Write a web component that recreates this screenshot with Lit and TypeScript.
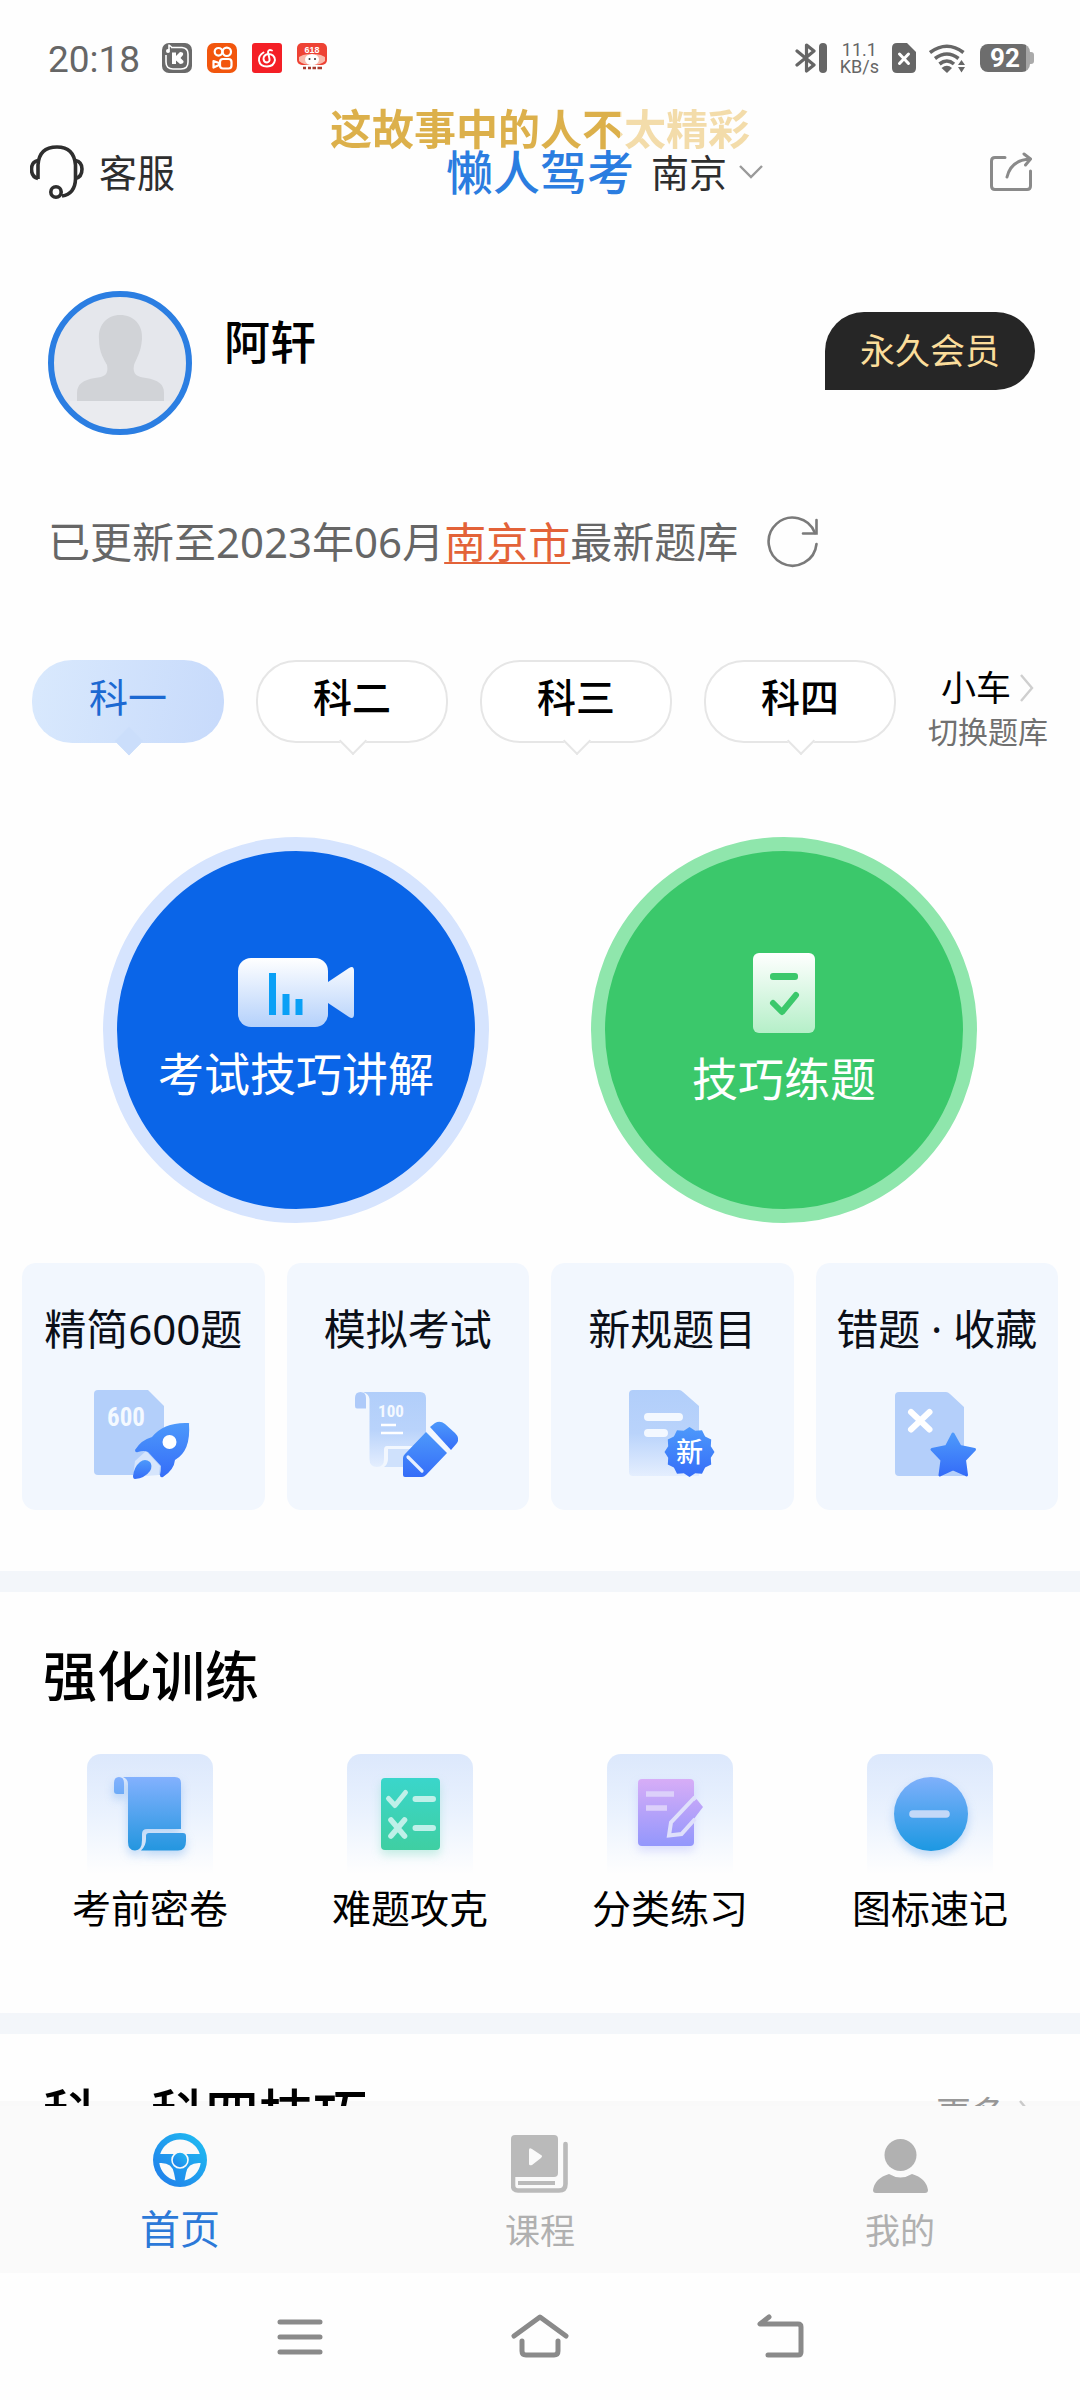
import { LitElement, html, svg, css, type TemplateResult } from "lit";
import { customElement, state } from "lit/decorators.js";
import { classMap } from "lit/directives/class-map.js";

interface Entry {
  label: string;
  icon: TemplateResult;
}

/* ---------- status bar glyphs ---------- */

const recorderIcon = html`<svg class="app-icon" viewBox="0 0 30 30" aria-hidden="true">
  <rect width="30" height="30" rx="7" fill="#6a6a6a" />
  <path d="M9 4.500H20Q26 5 26 11V19Q26 26 19 26H11Q4 26 4 19V12" fill="none" stroke="#fff" stroke-width="1.600" />
  <path d="M7 1.500V7M7 2L9.500 4" fill="none" stroke="#fff" stroke-width="1.600" />
  <circle cx="6" cy="8" r="2" fill="#fff" />
  <path d="M10 9.500H14V13L18 9Q22 9 21 12L18.500 15L21.500 18Q22 21 18 21L14 17.500V21H10Z" fill="#fff" />
</svg>`;

const cameraIcon = html`<svg class="app-icon" viewBox="0 0 30 30" aria-hidden="true">
  <rect width="30" height="30" rx="7" fill="#f2560d" />
  <g fill="none" stroke="#fff" stroke-width="2.200" stroke-linejoin="round">
    <circle cx="11.500" cy="8.800" r="3.800" />
    <circle cx="19.800" cy="8.800" r="4.200" />
    <rect x="13" y="16" width="11.500" height="9.500" rx="3" />
    <path d="M6.500 18L12 20V22L6.500 24.500Z" />
  </g>
</svg>`;

const musicIcon = html`<svg class="app-icon" viewBox="0 0 30 30" aria-hidden="true">
  <rect width="30" height="30" rx="3" fill="#f41f26" />
  <g fill="none" stroke="#fff" stroke-width="1.900" stroke-linecap="round">
    <path d="M11.500 9.500Q6.500 12.500 7 17.500Q8 23.500 15 23.500Q22 23.500 23 17Q22.500 11 16 11Q11.500 12 11.500 16Q12 19.500 15 19.500Q18 19 17.500 16L16 9Q16.500 6 20 7.500" />
  </g>
</svg>`;

const shopIcon = html`<svg class="app-icon" viewBox="0 0 30 30" aria-hidden="true">
  <rect y="0" width="30" height="22" rx="5" fill="#ee4234" />
  <path d="M2 14Q8 10 15 12Q22 10 28 14V18Q24 22 15 22Q6 22 2 18Z" fill="#f9b9ab" />
  <ellipse cx="15" cy="16.500" rx="7" ry="5.500" fill="#fff" />
  <circle cx="12.500" cy="16" r="1" fill="#333" /><circle cx="18" cy="16" r="1" fill="#333" />
  <text x="15" y="10" text-anchor="middle" class="promo">618</text>
  <path d="M6 25H9M11 25H14M15.500 25H19M20.500 25H25" stroke="#a83a2e" stroke-width="2.400" />
</svg>`;

const bluetoothIcon = html`<svg width="32" height="30" viewBox="0 0 32 30" aria-hidden="true">
  <path d="M2 8L19 22L11.500 28V2L19 8L2 22" fill="none" stroke="#666" stroke-width="3.200" stroke-linejoin="round" stroke-linecap="round" />
  <rect x="24" width="8" height="30" rx="4" fill="#666" />
</svg>`;

const simIcon = html`<svg width="24" height="30" viewBox="0 0 24 30" aria-hidden="true">
  <path d="M5 0H15L24 9V25Q24 30 19 30H5Q0 30 0 25V5Q0 0 5 0Z" fill="#666" />
  <path d="M7.500 11L16.500 20.500M16.500 11L7.500 20.500" stroke="#fff" stroke-width="3" stroke-linecap="round" />
</svg>`;

const wifiIcon = html`<svg width="36" height="30" viewBox="0 0 36 30" aria-hidden="true">
  <g fill="none" stroke="#666" stroke-width="3.600">
    <path d="M1 9.500Q18 -3 34.500 9.500" />
    <path d="M6 15.500Q18 6.500 29.500 15.500" />
    <path d="M10.500 21Q18 15 25 21" />
  </g>
  <path d="M12.500 25Q18 20.500 23 25L18 30Z" fill="#666" />
  <path d="M29 22L32.500 17L36 22ZM29 24L32.500 29.500L36 24Z" fill="#666" />
</svg>`;

/* ---------- header and profile ---------- */

const headsetIcon = html`<svg width="54" height="54" viewBox="0 0 54 54" fill="none" stroke="#2e2e2e" stroke-width="3.600" aria-hidden="true">
  <path d="M8 34V20Q9 2 27 2Q44 2 45.500 20V34Q45 49 32 51" />
  <path d="M8 15.500Q1.500 17 1.500 24Q1.500 32 8 33.500" />
  <path d="M45.500 15.500Q52 17 52 24Q52 32 45.500 33.500" />
  <circle cx="26" cy="47" r="5.200" />
</svg>`;

const shareIcon = html`<svg width="42" height="40" viewBox="0 0 42 40" fill="none" stroke="#8a8a8a" stroke-width="3" stroke-linecap="round" stroke-linejoin="round" aria-hidden="true">
  <path d="M15 5.500H5Q1.500 5.500 1.500 9V34Q1.500 37.500 5 37.500H37Q40.500 37.500 40.500 34V19" />
  <path d="M17 25Q21 8 40 7M34 2L40.500 7L35.500 13" />
</svg>`;

const refreshIcon = html`<svg width="52" height="52" viewBox="0 0 52 52" fill="none" stroke="#7a7a7a" stroke-width="2.600" stroke-linecap="round" aria-hidden="true">
  <path d="M49.500 28A24 24 0 1 1 48 17" />
  <path d="M49.500 4V17.500H36" />
</svg>`;

const avatarIcon = html`<svg class="avatar" viewBox="0 0 144 144" role="img" aria-label="头像">
  <circle cx="72" cy="72" r="69" fill="#e5e7ec" />
  <path d="M22 110H122V122Q100 141 72 141Q44 141 22 122Z" fill="#eaebef" />
  <path d="M72 24C86 24 95 34 94 48C93 62 88 68 86 74C84 84 90 86 98 87C110 89 116 93 116 102V110H29V102C29 93 35 89 47 87C56 86 61 84 59 74C56 68 51 62 51 48C50 34 59 24 72 24Z" fill="#d1d3d7" />
  <circle cx="72" cy="72" r="69" fill="none" stroke="#2b7ee2" stroke-width="6" />
</svg>`;

const chevronDown = html`<svg width="24" height="14" viewBox="0 0 24 14" fill="none" stroke="#9a9a9a" stroke-width="2.400" aria-hidden="true">
  <path d="M1 1L12 12L23 1" />
</svg>`;

const chevronRight = html`<svg width="16" height="28" viewBox="0 0 16 28" fill="none" stroke="#cfcfcf" stroke-width="2.400" aria-hidden="true">
  <path d="M2 1L13 14L2 27" />
</svg>`;

/* ---------- large round actions ---------- */

const videoIcon = html`<svg width="116" height="70" viewBox="0 0 116 70" aria-hidden="true">
  <defs>
    <linearGradient id="video" gradientUnits="userSpaceOnUse" x1="0" y1="0" x2="0" y2="70">
      <stop offset="0" stop-color="#fff" /><stop offset="1" stop-color="#b3d0fb" />
    </linearGradient>
  </defs>
  <rect width="90" height="69" rx="13" fill="url(#video)" />
  <path d="M90 24L111 10Q116 7 116 13V56Q116 62 111 59L90 45Z" fill="url(#video)" />
  <path d="M34.500 15V57M48 36V57M61 41V57" stroke="#0aa0f6" stroke-width="7" />
</svg>`;

const checklistIcon = html`<svg width="62" height="80" viewBox="0 0 62 80" aria-hidden="true">
  <defs>
    <linearGradient id="sheet" x1="0" y1="0" x2="0" y2="1">
      <stop offset="0" stop-color="#fff" /><stop offset="1" stop-color="#b5efc8" />
    </linearGradient>
  </defs>
  <rect width="62" height="80" rx="6" fill="url(#sheet)" />
  <rect x="17" y="20" width="28" height="7" rx="3" fill="#3bc86b" />
  <path d="M20 50L29 59L43 42" fill="none" stroke="#3bc86b" stroke-width="6" stroke-linecap="round" stroke-linejoin="round" />
</svg>`;

/* ---------- card icons (110 x 90) ---------- */

const blueDefs = svg`<defs>
  <linearGradient id="deep" x1="0" y1="0" x2="0" y2="1">
    <stop offset="0" stop-color="#4d99fb" /><stop offset="1" stop-color="#356df8" />
  </linearGradient>
  <linearGradient id="pale" x1="0" y1="0" x2="0" y2="1">
    <stop offset="0" stop-color="#b1cefa" /><stop offset=".5" stop-color="#b9d3fb" /><stop offset="1" stop-color="#e4eefe" />
  </linearGradient>
</defs>`;

const rocketCard = html`<svg class="card-icon" viewBox="0 0 110 90" aria-hidden="true">
  ${blueDefs}
  <path d="M10 1H60L76 17V86H10Q6 86 6 82V5Q6 1 10 1Z" fill="#b3cffa" />
  <text x="38" y="37" text-anchor="middle" class="digits-large">600</text>
  <path d="M58 62L72 77L71 86L45 88L47 72Z" fill="#d6e5fc" />
  <path d="M101 35Q102 34 100 34Q76 33 64 48Q53 51 47 61Q47 64 50 63Q56 61 60 63L73 77Q73 82 72 86Q72 89 75 88Q86 81 87 71Q103 62 101 35Z" fill="url(#deep)" />
  <circle cx="81.500" cy="53" r="7" fill="#fff" />
  <path d="M52 73Q57 69 62 73Q65 77 62 82Q57 89 47 90Q45 90 45 87Q46 78 52 73Z" fill="url(#deep)" />
</svg>`;

const examCard = html`<svg class="card-icon" viewBox="0 0 110 90" aria-hidden="true">
  ${blueDefs}
  <path d="M2 9Q2 3 7.500 3Q13 3 13 9V19.500H4Q2 19.500 2 17Z" fill="#aecaf9" />
  <path d="M10 3H67Q73 3 73 9V57H34Q31 57 31 61V70Q31 78 24 78Q16.500 78 16.500 70V10Q16 5 10 3Z" fill="url(#pale)" />
  <path d="M35 60H70V78H31Q35 75 35 70Z" fill="#cfe1fc" />
  <text x="38" y="28" text-anchor="middle" class="digits-small">100</text>
  <path d="M28 36H43M28 44H50" stroke="#fff" stroke-width="2.600" />
  <path d="M77 38L82 34Q87 31 92 35L102 44Q107 49 104 54L98 61Z" fill="url(#deep)" />
  <path d="M73 43L94 64L73 86Q71 88 69 88H52Q50 88 50 86V69Q50 67 52 65Z" fill="url(#deep)" />
  <path d="M55 68L69 82" stroke="#e6efff" stroke-width="3.200" stroke-linecap="round" />
</svg>`;

const sealPoints = Array.from({ length: 24 }, (_, i) => {
  const r = i % 2 ? 22 : 25;
  const a = (i * Math.PI) / 12;
  return `${(72.5 + r * Math.sin(a)).toFixed(1)},${(63 - r * Math.cos(a)).toFixed(1)}`;
}).join(" ");

const newRulesCard = html`<svg class="card-icon" viewBox="0 0 110 90" aria-hidden="true">
  ${blueDefs}
  <path d="M16 1H62Q64 1 66 3L82 17V87H16Q12 87 12 83V5Q12 1 16 1Z" fill="url(#pale)" />
  <path d="M31 28H62M31 44H47" stroke="#f3f8ff" stroke-width="8" stroke-linecap="round" />
  <polygon points=${sealPoints} fill="url(#deep)" />
  <text x="72.500" y="73" text-anchor="middle" class="seal">新</text>
</svg>`;

const starCard = html`<svg class="card-icon" viewBox="0 0 110 90" aria-hidden="true">
  ${blueDefs}
  <path d="M17 3H64Q66 3 68 5L82 18V87H17Q13 87 13 83V7Q13 3 17 3Z" fill="#b4cffa" />
  <path d="M29 23L47.500 40.500M47.500 23L29 40.500" stroke="#fff" stroke-width="6" stroke-linecap="round" />
  <path d="M71 45L78 57.500L92.500 60.500L82.500 71L84.500 86L71 80L58 86L60 71L50 60.500L64.500 57.500Z" fill="url(#deep)" stroke="url(#deep)" stroke-width="3" stroke-linejoin="round" />
</svg>`;

/* ---------- training tiles (126 x 120) ---------- */

const scrollTile = html`<svg class="tile" viewBox="0 0 126 120" aria-hidden="true">
  <defs>
    <linearGradient id="scroll" gradientUnits="userSpaceOnUse" x1="0" y1="23" x2="0" y2="97">
      <stop offset="0" stop-color="#83b1fe" /><stop offset="1" stop-color="#2396df" />
    </linearGradient>
  </defs>
  <g class="soft-blue" fill="url(#scroll)">
    <path d="M27 29Q27 23 32 23Q37 23 37 29V40H30Q27 40 27 37Z" />
    <path d="M36 23H88Q94 23 94 29V75H60Q55 75 55 80V86Q55 96.500 48 96.500Q41 96.500 41 88V30Q41 25 36 23Z" />
    <path d="M59 82Q59 79 62 79H96Q99 79 99 82V87Q99 96.500 91 96.500H54Q59 92 59 85Z" />
  </g>
</svg>`;

const hardTile = html`<svg class="tile" viewBox="0 0 126 120" aria-hidden="true">
  <defs>
    <linearGradient id="teal" x1="0" y1="0" x2="0" y2="1">
      <stop offset="0" stop-color="#3ad6cb" /><stop offset="1" stop-color="#3fcfa2" />
    </linearGradient>
  </defs>
  <rect class="soft-teal" x="34" y="24" width="59" height="72" rx="4" fill="url(#teal)" />
  <g fill="none" stroke="#bff0e9" stroke-linecap="round" stroke-linejoin="round">
    <path d="M41.500 44.500L48 51.500L58.500 38.500" stroke-width="5" />
    <path d="M44 66L57.500 82M57.500 66L44 82" stroke-width="5.600" />
    <path d="M68.500 45H86M68.500 74H86" stroke-width="6" />
  </g>
</svg>`;

const categoryTile = html`<svg class="tile" viewBox="0 0 126 120" aria-hidden="true">
  <defs>
    <linearGradient id="violet" gradientUnits="userSpaceOnUse" x1="0" y1="25" x2="0" y2="92">
      <stop offset="0" stop-color="#d7adf7" /><stop offset="1" stop-color="#9397fc" />
    </linearGradient>
  </defs>
  <rect class="soft-violet" x="31" y="25" width="56" height="67" rx="4" fill="url(#violet)" />
  <path d="M39 40H67M39 54H60" stroke="#dcd0fa" stroke-width="5.600" />
  <path d="M89.500 45L96 53L75 80.500L61.500 82L64 68Z" fill="url(#violet)" />
  <path d="M88 43L64 68.500L62 81.500L74.500 80L88 65" fill="none" stroke="#dfe0fb" stroke-width="4" />
</svg>`;

const signTile = html`<svg class="tile" viewBox="0 0 126 120" aria-hidden="true">
  <defs>
    <linearGradient id="sign" x1="0" y1="0" x2="0" y2="1">
      <stop offset="0" stop-color="#7fb0fb" /><stop offset="1" stop-color="#1c98e2" />
    </linearGradient>
  </defs>
  <circle class="soft-blue" cx="64" cy="60" r="37" fill="url(#sign)" />
  <path d="M46 60H79" stroke="#c3d8f8" stroke-width="7.600" stroke-linecap="round" />
</svg>`;

/* ---------- bottom tabs ---------- */

const wheelIcon = html`<svg width="54" height="60" viewBox="0 0 54 60" aria-hidden="true">
  <defs>
    <linearGradient id="wheel" x1="0" y1="1" x2="1" y2="0">
      <stop offset="0" stop-color="#2179ea" /><stop offset="1" stop-color="#1fc0f2" />
    </linearGradient>
  </defs>
  <circle cx="27" cy="27" r="27" fill="url(#wheel)" />
  <g fill="#fafafa">
    <path d="M7.200 21A20.800 20.800 0 0 1 46.800 21Z" />
    <path d="M6.300 30Q19 29 21 40L22.500 47.400A21 21 0 0 1 6.300 30Z" />
    <path d="M47.700 30Q35 29 33 40L31.500 47.400A21 21 0 0 0 47.700 30Z" />
  </g>
  <circle cx="27" cy="27" r="8" fill="url(#wheel)" stroke="#fafafa" stroke-width="1.600" />
</svg>`;

const courseIcon = html`<svg width="58" height="60" viewBox="0 0 58 60" aria-hidden="true">
  <rect y="2" width="47" height="42" rx="4" fill="#bababa" />
  <path d="M54.500 11V51Q54.500 57.500 48 57.500H7Q2 57.500 2 52V40" fill="none" stroke="#bababa" stroke-width="4.600" stroke-linecap="round" />
  <path d="M7 50H44" stroke="#bababa" stroke-width="4" />
  <path d="M18 17Q18 14 21 16L30 22Q32 23 30 25L21 32Q18 33 18 31Z" fill="#fafafa" />
</svg>`;

const personIcon = html`<svg width="55" height="60" viewBox="0 0 55 60" fill="#b1b1b1" aria-hidden="true">
  <circle cx="27.500" cy="22" r="16" />
  <path d="M16 41Q27.500 48 39 41Q53 45 55 57Q55 60 52 60H3Q0 60 0 57Q2 45 16 41Z" />
</svg>`;

@customElement("app-root")
export class AppRoot extends LitElement {
  @state() private subject = 0;

  private subjects = ["科一", "科二", "科三", "科四"];

  private cards: Entry[] = [
    { label: "精简600题", icon: rocketCard },
    { label: "模拟考试", icon: examCard },
    { label: "新规题目", icon: newRulesCard },
    { label: "错题 · 收藏", icon: starCard },
  ];

  private drills: Entry[] = [
    { label: "考前密卷", icon: scrollTile },
    { label: "难题攻克", icon: hardTile },
    { label: "分类练习", icon: categoryTile },
    { label: "图标速记", icon: signTile },
  ];

  private tabs: Entry[] = [
    { label: "首页", icon: wheelIcon },
    { label: "课程", icon: courseIcon },
    { label: "我的", icon: personIcon },
  ];

  static styles = css`
    :host {
      display: flex;
      flex-direction: column;
      height: 100vh;
      position: relative;
      overflow: hidden;
      background: #fefefe;
      color: #000;
      font-family: "Noto Sans", "Noto Sans CJK SC", sans-serif;
    }
    * { box-sizing: border-box; }
    svg { display: block; flex: none; }
    a { color: inherit; text-decoration: none; }
    button {
      margin: 0;
      padding: 0;
      border: 0;
      background: none;
      color: inherit;
      font: inherit;
    }
    h1, h2, p { margin: 0; font-weight: 500; }

    .status {
      flex: none;
      display: flex;
      align-items: center;
      justify-content: space-between;
      height: 116px;
      padding: 0 46px 0 48px;
      color: #666;
    }
    .status-group { display: flex; align-items: center; gap: 15px; }
    .clock {
      margin-right: 7px;
      font-family: Roboto, sans-serif;
      font-size: 37px;
      line-height: 40px;
      padding-top: 4px;
    }
    .app-icon { width: 30px; height: 30px; }
    .promo { font: 700 9px "Liberation Sans", sans-serif; fill: #fff; }
    .status-right { gap: 13px; }
    .speed {
      font-family: Roboto, sans-serif;
      font-size: 18px;
      line-height: 17px;
      text-align: center;
    }
    .battery { display: flex; align-items: center; margin-left: 2px; }
    .battery-body {
      width: 50px;
      height: 28px;
      border-radius: 8px;
      background: linear-gradient(90deg, #6d6d6d 92%, #a5a5a5 92%);
      color: #fff;
      font: 700 26px/28px Roboto, sans-serif;
      text-align: center;
    }
    .battery-tip { width: 4px; height: 12px; border-radius: 0 3px 3px 0; background: #aaa; }

    .lyric {
      position: absolute;
      top: 101px;
      left: 0;
      right: 0;
      text-align: center;
      font-size: 42px;
      line-height: 56px;
      font-weight: 700;
      pointer-events: none;
    }
    .lyric span {
      color: transparent;
      background: linear-gradient(90deg, #dcb04b 69%, #f3dcaa 69%);
      background-clip: text;
      -webkit-background-clip: text;
    }

    header {
      flex: none;
      display: grid;
      grid-template-columns: 1fr auto 1fr;
      align-items: center;
      height: 112px;
      padding: 0 48px;
      font-size: 38px;
      line-height: 48px;
      color: #2e2e2e;
    }
    .service { display: flex; align-items: center; gap: 15px; justify-self: start; margin-left: -18px; }
    h1 { font-size: 47px; line-height: 56px; color: #2b7de0; }
    .header-end { display: flex; align-items: center; justify-content: space-between; padding-left: 17px; }
    .city { display: flex; align-items: center; gap: 12px; }

    main { flex: 1 1 0; min-height: 0; overflow: hidden; }

    .profile { display: flex; align-items: flex-start; padding: 63px 45px 0 48px; }
    .avatar { width: 144px; height: 144px; }
    .name { flex: 1; padding: 20px 0 0 32px; font-size: 46px; line-height: 60px; }
    .vip {
      margin-top: 21px;
      padding: 15px 35px;
      border-radius: 40px 40px 40px 0;
      background: #262626;
      color: #fbdd9b;
      font-size: 35px;
      line-height: 48px;
    }

    .update {
      display: flex;
      align-items: center;
      gap: 29px;
      padding: 79px 48px 0;
      font-size: 42px;
      line-height: 56px;
      color: #666;
    }
    .update a {
      color: #e36238;
      text-decoration: underline;
      text-decoration-thickness: 2px;
      text-underline-offset: 4px;
    }

    .subjects { display: flex; gap: 32px; padding: 90px 32px 0; }
    .subject {
      position: relative;
      flex: 1;
      height: 83px;
      margin-bottom: 13px;
      padding-bottom: 10px;
      border: 2px solid #e6e6e6;
      border-radius: 40px;
      background: #fff;
      font-size: 39px;
      line-height: 48px;
      font-weight: 500;
    }
    .subject::after {
      content: "";
      position: absolute;
      left: 50%;
      bottom: -10px;
      width: 18px;
      height: 18px;
      margin-left: -9px;
      border: solid #e6e6e6;
      border-width: 0 2px 2px 0;
      background: #fff;
      rotate: 45deg;
    }
    .subject.active {
      border-color: transparent;
      background: linear-gradient(100deg, #d9e9fd, #c7dafb) border-box;
      color: #1c69d2;
      font-weight: 400;
    }
    .subject.active::after { border-color: #cbdefb; background: #cbdefb; }
    .bank { display: flex; flex-direction: column; align-items: center; width: 120px; padding-top: 6px; }
    .bank-type { display: flex; align-items: center; gap: 8px; font-size: 35px; line-height: 44px; }
    .bank-hint { font-size: 30px; line-height: 44px; color: #707070; }

    .actions { display: flex; justify-content: space-between; padding: 81px 103px 0; }
    .action {
      display: flex;
      flex-direction: column;
      align-items: center;
      justify-content: center;
      gap: 16px;
      width: 386px;
      height: 386px;
      border: 14px solid #d6e4fe;
      border-radius: 50%;
      background: #0a65e8;
      color: #fff;
      font-size: 46px;
      line-height: 58px;
    }
    .action.green { border-color: #8fe6ac; background: #3bc86b; }

    .cards { display: grid; grid-template-columns: repeat(4, 1fr); gap: 22px; padding: 40px 22px 61px; }
    .card {
      display: flex;
      flex-direction: column;
      align-items: center;
      gap: 32px;
      padding: 38px 0 31px;
      border-radius: 14px;
      background: #f2f7fe;
      color: #0b0f18;
      font-size: 42px;
      line-height: 56px;
      white-space: nowrap;
    }
    .card-icon { width: 110px; height: 90px; }
    .digits-large { font: 700 25px "Roboto Condensed", Roboto, sans-serif; fill: #f4f9ff; }
    .digits-small { font: 700 17px "Roboto Condensed", Roboto, sans-serif; fill: #f4f9ff; }
    .seal { font: 500 27px "Noto Sans CJK SC", sans-serif; fill: #fff; }

    .block { border-top: 21px solid #f3f6fa; padding: 52px 20px 81px; }
    .block.next { padding: 48px 20px 0; }
    .block-head { display: flex; align-items: center; justify-content: space-between; padding: 0 26px 0 23px; }
    h2 { font-size: 54px; line-height: 64px; }
    .more { display: flex; align-items: center; gap: 12px; font-size: 35px; line-height: 48px; color: #999; }
    .drills { display: grid; grid-template-columns: repeat(4, 1fr); padding-top: 46px; }
    .drill { display: flex; flex-direction: column; align-items: center; gap: 10px; font-size: 39px; line-height: 48px; }
    .tile {
      width: 126px;
      height: 120px;
      border-radius: 14px 14px 0 0;
      background: linear-gradient(#dce8fc, #eaf2fe 50%, #fefefe);
    }
    .soft-blue { filter: drop-shadow(0 5px 5px #2b7ee244); }
    .soft-teal { filter: drop-shadow(0 5px 5px #3fcfa244); }
    .soft-violet { filter: drop-shadow(0 5px 5px #9397fc44); }

    .tabbar {
      position: relative;
      flex: none;
      display: grid;
      grid-template-columns: repeat(3, 1fr);
      padding: 27px 0 18px;
      background: #fafafa;
      box-shadow: 0 -5px 0 rgba(0, 0, 0, 0.02);
    }
    .tab {
      display: flex;
      flex-direction: column;
      align-items: center;
      gap: 14px;
      font-size: 35px;
      line-height: 48px;
      color: #b0b0b0;
    }
    .tab.active { gap: 12px; font-size: 40px; color: #2c79d8; }

    .system {
      flex: none;
      display: flex;
      justify-content: center;
      align-items: center;
      gap: 180px;
      height: 127px;
    }
    .system button { display: flex; justify-content: center; width: 60px; }
  `;

  render() {
    return html`
      <div class="status">
        <div class="status-group">
          <span class="clock">20:18</span>
          ${recorderIcon}${cameraIcon}${musicIcon}${shopIcon}
        </div>
        <div class="status-group status-right">
          ${bluetoothIcon}
          <div class="speed">11.1<br />KB/s</div>
          ${simIcon}${wifiIcon}
          <div class="battery">
            <div class="battery-body">92</div>
            <div class="battery-tip"></div>
          </div>
        </div>
      </div>

      <header>
        <button class="service">${headsetIcon}客服</button>
        <h1>懒人驾考</h1>
        <div class="header-end">
          <button class="city">南京${chevronDown}</button>
          <button aria-label="分享">${shareIcon}</button>
        </div>
      </header>

      <main>
        <section class="profile">
          ${avatarIcon}
          <p class="name">阿轩</p>
          <a class="vip" href="#vip">永久会员</a>
        </section>

        <div class="update">
          <span>已更新至2023年06月<a href="#city">南京市</a>最新题库</span>
          <button aria-label="刷新">${refreshIcon}</button>
        </div>

        <nav class="subjects">
          ${this.subjects.map(
            (name, i) => html`<button
              class=${classMap({ subject: true, active: i === this.subject })}
              @click=${() => (this.subject = i)}
            >${name}</button>`
          )}
          <button class="bank">
            <span class="bank-type">小车${chevronRight}</span>
            <span class="bank-hint">切换题库</span>
          </button>
        </nav>

        <div class="actions">
          <a class="action" href="#lessons">${videoIcon}<span>考试技巧讲解</span></a>
          <a class="action green" href="#practice">${checklistIcon}<span>技巧练题</span></a>
        </div>

        <div class="cards">
          ${this.cards.map((c) => html`<a class="card" href="#card"><span>${c.label}</span>${c.icon}</a>`)}
        </div>

        <section class="block">
          <div class="block-head"><h2>强化训练</h2></div>
          <div class="drills">
            ${this.drills.map((d) => html`<a class="drill" href="#drill">${d.icon}<span>${d.label}</span></a>`)}
          </div>
        </section>

        <section class="block next">
          <div class="block-head">
            <h2>科一科四技巧</h2>
            <a class="more" href="#more">更多${chevronRight}</a>
          </div>
        </section>
      </main>

      <nav class="tabbar">
        ${this.tabs.map(
          (t, i) => html`<a class=${classMap({ tab: true, active: i === 0 })} href="#tab">${t.icon}<span>${t.label}</span></a>`
        )}
      </nav>

      <div class="system">
        <button aria-label="菜单">
          <svg width="46" height="44" viewBox="0 0 46 44" stroke="#8a8a8a" stroke-width="5" stroke-linecap="round">
            <path d="M3 7H43M3 22H43M3 37H43" />
          </svg>
        </button>
        <button aria-label="主页">
          <svg width="58" height="46" viewBox="0 0 58 46" fill="none" stroke="#8a8a8a" stroke-width="5" stroke-linecap="round" stroke-linejoin="round">
            <path d="M3 22L29 3L55 22" />
            <path d="M11 27V37Q11 41 15 41H43Q47 41 47 37V27" />
          </svg>
        </button>
        <button aria-label="返回">
          <svg width="48" height="46" viewBox="0 0 48 46" fill="none" stroke="#8a8a8a" stroke-width="5" stroke-linecap="round" stroke-linejoin="round">
            <path d="M13 3L4 10H42Q45 10 45 13V38Q45 41 42 41H12" />
          </svg>
        </button>
      </div>

      <div class="lyric"><span>这故事中的人不太精彩</span></div>
    `;
  }
}
